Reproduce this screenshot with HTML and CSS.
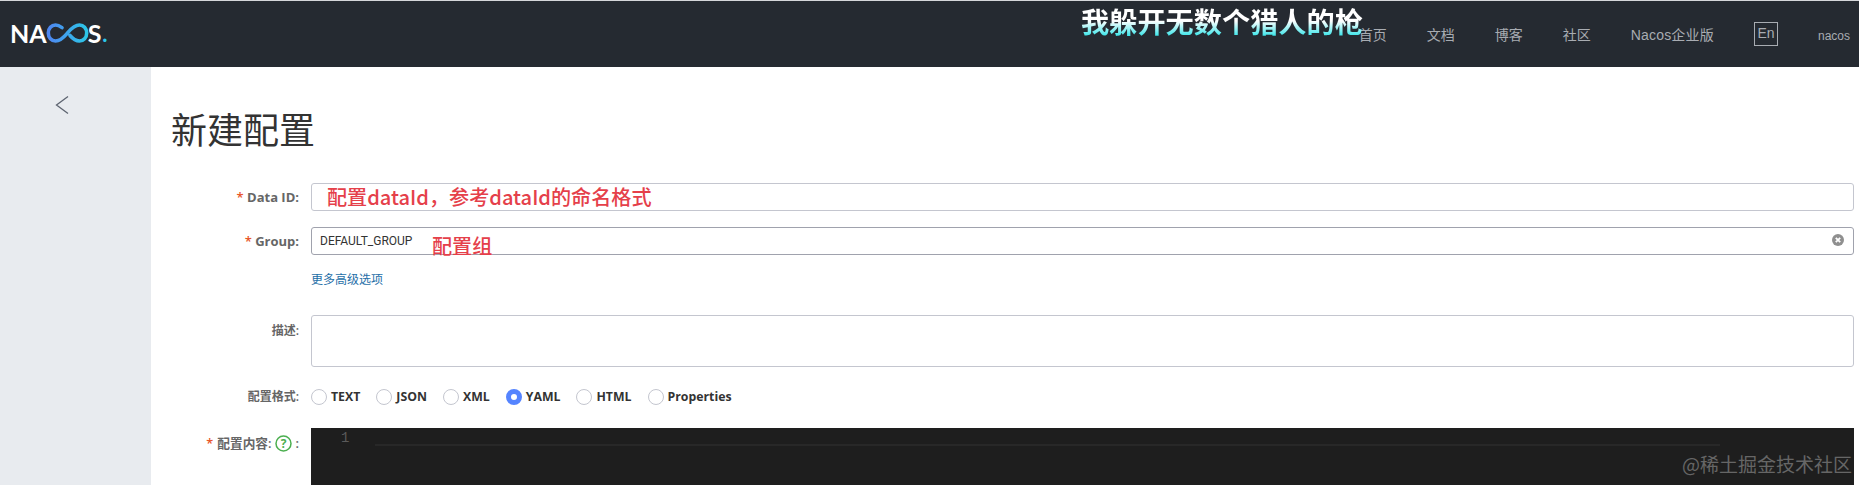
FILE: index.html
```html
<!DOCTYPE html>
<html lang="zh-CN">
<head>
<meta charset="utf-8">
<title>Nacos</title>
<link rel="stylesheet" href="styles.css">
</head>
<body>
<header class="topbar">
  <div class="logo">
    <span>NA</span><svg class="logo-inf" width="43" height="20" viewBox="0 0 43 20"><defs><linearGradient id="g" x1="0" x2="1" y1="0" y2="0"><stop offset="0" stop-color="#4f86f0"/><stop offset="1" stop-color="#2cc6e8"/></linearGradient></defs><path d="M16 4.600C13.500 2.800 11.500 2 9.500 2 5.500 2 2.300 5.300 2.300 10s3.200 8 7.200 8c5.500 0 9-4.500 12-8s6.500-8 12-8c4 0 7.200 3.300 7.200 8s-3.200 8-7.200 8c-4 0-7-2.500-9.500-5.500" fill="none" stroke="url(#g)" stroke-width="3.600" stroke-linecap="round"/></svg><span>S</span><span class="logo-dot">.</span>
  </div>
  <nav class="nav">
    <a>首页</a><a>文档</a><a>博客</a><a>社区</a><a class="ent">Nacos企业版</a><a class="lang">En</a><a class="user">nacos</a>
  </nav>
  <div class="danmaku">我躲开无数个猎人的枪</div>
</header>
<div class="layout">
  <aside class="sidebar">
    <svg class="back" width="14" height="20" viewBox="0 0 14 20"><path d="M13 1.500 1.500 10 13 18.500" fill="none" stroke="#5d6470" stroke-width="1.300"/></svg>
  </aside>
  <main class="main">
    <h1 class="title">新建配置</h1>
    <form class="form">
      <div class="row row-input">
        <label class="label label-en"><i class="star">*</i> Data ID:</label>
        <div class="control">
          <div class="input"></div>
          <span class="note note-id">配置dataId，参考dataId的命名格式</span>
        </div>
      </div>
      <div class="row row-input">
        <label class="label label-en"><i class="star">*</i> Group:</label>
        <div class="control">
          <div class="input input-active">DEFAULT_GROUP
            <svg class="clear" width="12" height="12" viewBox="0 0 12 12"><circle cx="6" cy="6" r="6" fill="#8f8f8f"/><path d="M3.800 3.800l4.400 4.400M8.200 3.800 3.800 8.200" stroke="#fff" stroke-width="1.800"/></svg>
          </div>
          <span class="note note-group">配置组</span>
        </div>
      </div>
      <div class="row row-link">
        <span></span>
        <a class="more">更多高级选项</a>
      </div>
      <div class="row row-area">
        <label class="label label-area">描述:</label>
        <div class="textarea"></div>
      </div>
      <div class="row row-radio">
        <label class="label">配置格式:</label>
        <div class="radios">
          <span class="radio"><i class="dot"></i>TEXT</span>
          <span class="radio"><i class="dot"></i>JSON</span>
          <span class="radio"><i class="dot"></i>XML</span>
          <span class="radio"><i class="dot dot-on"></i>YAML</span>
          <span class="radio"><i class="dot"></i>HTML</span>
          <span class="radio"><i class="dot"></i>Properties</span>
        </div>
      </div>
      <div class="row row-editor">
        <label class="label label-editor"><i class="star star-tight">*</i>配置内容:
          <svg class="help" width="17" height="17" viewBox="0 0 17 17"><circle cx="8.500" cy="8.500" r="7.500" fill="none" stroke="#4caf50" stroke-width="1.500"/><text x="8.500" y="12.500" text-anchor="middle" class="help-q">?</text></svg>
          <span class="colon">:</span>
        </label>
        <div class="editor">
          <div class="gutter">1</div>
          <div class="code"><div class="line"></div></div>
          <div class="minimap"></div>
          <span class="watermark">@稀土掘金技术社区</span>
        </div>
      </div>
    </form>
  </main>
</div>
</body>
</html>
```
FILE: styles.css
```css
* { box-sizing: border-box; }
html, body { margin: 0; padding: 0; height: 485px; overflow: hidden; background: #fff; }
body { font: 12px "Open Sans", "Noto Sans CJK SC", sans-serif; color: #333; }

.topbar {
  position: relative;
  height: 67px;
  background: #252a31;
  border-top: 1px solid #d5d7da;
  display: flex;
  justify-content: space-between;
  padding: 0 9px 0 10px;
}
.logo {
  display: flex;
  align-items: center;
  height: 64px;
  font: 700 25px/1 Lato, sans-serif;
  color: #fff;
}
.logo-inf { margin: 0 -1px 0 -1px; }
.logo-dot { color: #2cc6e8; font-size: 22px; margin-left: 1px; padding-top: 2px; }
.nav {
  display: flex;
  align-items: center;
  gap: 40px;
  height: 65px;
  font: 14px "Liberation Sans", "Noto Sans CJK SC", sans-serif;
  color: #a8acb2;
}
.ent { letter-spacing: .2px; }
.lang {
  width: 24px;
  height: 24px;
  border: 1px solid #a8acb2;
  text-align: center;
  line-height: 20px;
}
.user { font-size: 12px; margin-top: 4px; }
.danmaku {
  position: absolute;
  left: 1081px;
  top: 1px;
  font: 700 28.200px/38px "Noto Sans CJK SC", sans-serif;
  white-space: nowrap;
  color: transparent;
  background: linear-gradient(180deg, #fff 50%, #3fe6ea 88%);
  -webkit-background-clip: text;
  background-clip: text;
}

.layout { display: flex; height: 418px; }
.sidebar { width: 151px; flex: none; background: #e8ebef; padding: 28px 0 0 55px; }
.back { display: block; }
.main { flex: 1; padding: 36px 5px 0 0; min-width: 0; }
.title {
  margin: 0 0 30px 20px;
  font: 400 36px/50px "Noto Sans CJK SC", sans-serif;
  color: #333;
}
.row { display: grid; grid-template-columns: 148px 1fr; column-gap: 12px; }
.label {
  text-align: right;
  font-weight: 600;
  color: #666;
  line-height: 28px;
  white-space: nowrap;
}
.label-en { font-size: 13px; font-weight: 700; }
.star { font-style: normal; color: #e8562a; font-weight: 600; }
.star-tight { margin-right: 1px; }
.row-input { margin-bottom: 16px; }
.control { position: relative; }
.input {
  position: relative;
  height: 28px;
  border: 1px solid #c4c6cf;
  border-radius: 3px;
  padding: 0 8px;
  font: 12px/26px Roboto, sans-serif;
  color: #333;
}
.input-active { border-color: #a0a2ad; }
.clear { position: absolute; right: 9px; top: 6px; }
.note {
  position: absolute;
  font: 500 20.100px/26px "Noto Sans CJK SC", sans-serif;
  color: #e5404a;
  white-space: nowrap;
}
.note-id { left: 16px; top: 1px; }
.note-group { left: 121px; top: 6px; }
.row-link { padding-top: 1px; margin-bottom: 27px; }
.more { color: #1f6fa8; line-height: 16px; font-size: 12px; }
.textarea { height: 52px; border: 1px solid #c4c6cf; border-radius: 3px; }
.label-area { line-height: 32px; }
.row-radio { padding-top: 22px; }
.row-radio .label { line-height: 16px; }
.radios { display: flex; gap: 16px; }
.radio {
  display: flex;
  align-items: center;
  gap: 4px;
  font-size: 12.300px;
  font-weight: 700;
  color: #333;
  line-height: 16px;
}
.dot {
  width: 16px;
  height: 16px;
  border: 1px solid #c4c6cf;
  border-radius: 50%;
  background: #fff;
  flex: none;
}
.dot-on {
  border: 5px solid #5584ff;
  background: #fff;
}
.row-editor { margin-top: 23px; }
.label-editor {
  display: flex;
  justify-content: flex-end;
  align-items: center;
  height: 30px;
  gap: 3px;
  font-size: 12.700px;
}
.colon { margin: 0 0 0 1px; }
.help { flex: none; }
.help-q { font: 700 12px "Open Sans", sans-serif; fill: #4caf50; }
.editor {
  position: relative;
  height: 57px;
  background: #1e1e1e;
  display: flex;
  overflow: hidden;
}
.gutter {
  width: 64px;
  flex: none;
  font: 14px/20px "Liberation Mono", monospace;
  color: #5a5a5a;
  padding-left: 30px;
}
.code { width: 1345px; flex: none; }
.line { height: 18px; border-bottom: 2px solid #282828; }
.minimap { flex: 1; }
.watermark {
  position: absolute;
  right: 2px;
  bottom: 9px;
  font: 19px/24px "Noto Sans CJK SC", sans-serif;
  color: #666;
  white-space: nowrap;
}
```
